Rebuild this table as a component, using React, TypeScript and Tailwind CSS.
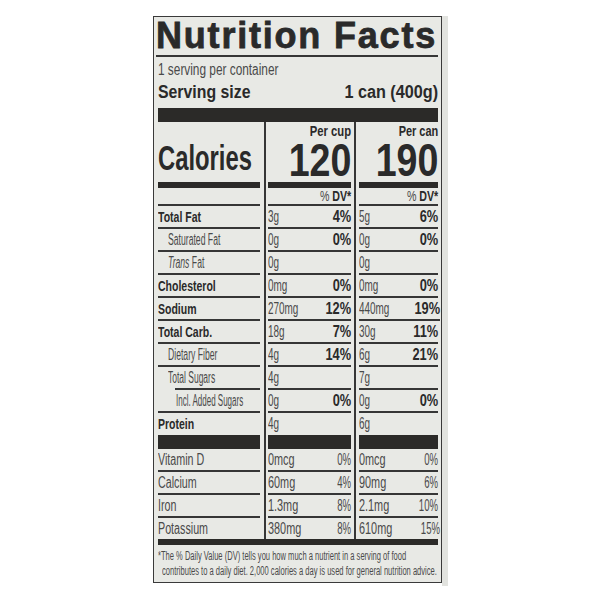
import React from "react";

const sans = "font-['Liberation_Sans',Arial,sans-serif]";

type Nutrient = {
  name: React.ReactNode;
  kind: "main" | "sub" | "sub2";
  cup: string;
  cupDv?: string;
  can: string;
  canDv?: string;
  line?: boolean;
  indentLine?: boolean;
};

const nutrients: Nutrient[] = [
  { name: "Total Fat", kind: "main", cup: "3g", cupDv: "4%", can: "5g", canDv: "6%" },
  { name: "Saturated Fat", kind: "sub", cup: "0g", cupDv: "0%", can: "0g", canDv: "0%" },
  { name: <><i>Trans</i> Fat</>, kind: "sub", cup: "0g", can: "0g" },
  { name: "Cholesterol", kind: "main", cup: "0mg", cupDv: "0%", can: "0mg", canDv: "0%" },
  { name: "Sodium", kind: "main", cup: "270mg", cupDv: "12%", can: "440mg", canDv: "19%" },
  { name: "Total Carb.", kind: "main", cup: "18g", cupDv: "7%", can: "30g", canDv: "11%" },
  { name: "Dietary Fiber", kind: "sub", cup: "4g", cupDv: "14%", can: "6g", canDv: "21%" },
  { name: "Total Sugars", kind: "sub", cup: "4g", can: "7g", indentLine: true },
  { name: "Incl. Added Sugars", kind: "sub2", cup: "0g", cupDv: "0%", can: "0g", canDv: "0%" },
  { name: "Protein", kind: "main", cup: "4g", can: "6g", line: false },
];

const vitamins = [
  { name: "Vitamin D", cup: "0mcg", cupDv: "0%", can: "0mcg", canDv: "0%" },
  { name: "Calcium", cup: "60mg", cupDv: "4%", can: "90mg", canDv: "6%" },
  { name: "Iron", cup: "1.3mg", cupDv: "8%", can: "2.1mg", canDv: "10%" },
  { name: "Potassium", cup: "380mg", cupDv: "8%", can: "610mg", canDv: "15%" },
];

// condensed text: the label's face is a narrow Helvetica, so squeeze Liberation Sans
function T({ children, className = "", right = false }: { children: React.ReactNode; className?: string; right?: boolean }) {
  return (
    <span className={`inline-block whitespace-nowrap ${right ? "origin-right" : "origin-left"} ${className}`}>
      {children}
    </span>
  );
}

function Row({
  left,
  mid,
  right,
  line = true,
  indentLine = false,
  height = "h-[23px]",
}: {
  left: React.ReactNode;
  mid: React.ReactNode;
  right: React.ReactNode;
  line?: boolean;
  indentLine?: boolean;
  height?: string;
}) {
  const ln = line ? "border-b-2 border-[#363636]" : "";
  return (
    <div className={`flex ${height}`}>
      <div className="w-[106px] shrink-0 pr-[4px]">
        <div className={`h-full flex items-center ${ln} ${indentLine ? "ml-[17px]" : ""}`}>{left}</div>
      </div>
      <div className="w-[90px] shrink-0 border-l-2 border-[#363636] pl-[2px] pr-[3px]">
        <div className={`h-full flex items-center justify-between ${ln}`}>{mid}</div>
      </div>
      <div className="flex-1 border-l-2 border-[#363636] pl-[3px]">
        <div className={`h-full flex items-center justify-between ${ln}`}>{right}</div>
      </div>
    </div>
  );
}

function Amount({ value, dv }: { value: string; dv?: string }) {
  return (
    <>
      <T className="text-[16px] leading-[18px] text-[#4a4a4a] scale-x-[0.62]">{value}</T>
      {dv && (
        <T right className="text-[16px] leading-[18px] font-bold text-[#2a2a2a] scale-x-[0.8]">
          {dv}
        </T>
      )}
    </>
  );
}

function VitAmount({ value, dv }: { value: string; dv: string }) {
  return (
    <>
      <T className="text-[16px] leading-[18px] text-[#4a4a4a] scale-x-[0.68]">{value}</T>
      <T right className="text-[16px] leading-[18px] text-[#4a4a4a] scale-x-[0.6]">
        {dv}
      </T>
    </>
  );
}

function Bar({ h }: { h: string }) {
  return <div className={`${h} bg-[#2b2a28]`} />;
}

function DvHead() {
  return (
    <T right className="text-[14px] leading-[16px] scale-x-[0.76]">
      <span className="text-[#4a4a4a]">%&nbsp;</span>
      <span className="font-bold">DV*</span>
    </T>
  );
}

export default function App() {
  return (
    <div className="w-[600px] h-[600px] bg-white flex pt-[16px] pl-[153px]">
      <div className={`w-[289px] h-[567px] border border-[#3a3a3a] bg-[#e8e9e5] pl-[4px] pr-[3px] flex flex-col text-[#2a2a2a] ${sans}`}>
        {/* header */}
        <div className="h-[40px] border-b-2 border-[#363636] -ml-[2px]">
          <div className="font-bold text-[36px] leading-[38px] tracking-[1.8px] [-webkit-text-stroke:0.8px_#2a2a2a] whitespace-nowrap">
            Nutrition Facts
          </div>
        </div>
        <div className="h-[23px] pt-[1px] leading-[23px]">
          <T className="text-[16px] text-[#4a4a4a] scale-x-[0.74]">1 serving per container</T>
        </div>
        <div className="h-[24px] flex justify-between items-center leading-[24px]">
          <T className="text-[18px] font-bold scale-x-[0.88]">Serving size</T>
          <T right className="text-[18px] font-bold scale-x-[0.9]">
            1 can (400g)
          </T>
        </div>
        <div className="mt-[4px]">
          <Bar h="h-[14px]" />
        </div>

        {/* calories */}
        <div className="flex h-[66px]">
          <div className="w-[106px] shrink-0 pr-[4px] flex flex-col justify-end">
            <div className="leading-[30px] mb-[2px]">
              <T className="text-[35px] font-bold scale-x-[0.68]">Calories</T>
            </div>
            <Bar h="h-[6px]" />
          </div>
          <div className="w-[90px] shrink-0 border-l-2 border-[#363636] pl-[2px] pr-[3px] flex flex-col">
            <div className="h-[18px] flex justify-end leading-[17px]">
              <T right className="text-[15px] font-bold scale-x-[0.75]">Per cup</T>
            </div>
            <div className="flex justify-end leading-[40px]">
              <T right className="text-[47px] font-bold scale-x-[0.8]">120</T>
            </div>
            <div className="mt-auto">
              <Bar h="h-[6px]" />
            </div>
          </div>
          <div className="flex-1 border-l-2 border-[#363636] pl-[3px] flex flex-col">
            <div className="h-[18px] flex justify-end leading-[17px]">
              <T right className="text-[15px] font-bold scale-x-[0.73]">Per can</T>
            </div>
            <div className="flex justify-end leading-[40px]">
              <T right className="text-[47px] font-bold scale-x-[0.8]">190</T>
            </div>
            <div className="mt-auto">
              <Bar h="h-[6px]" />
            </div>
          </div>
        </div>

        {/* % DV */}
        <div className="flex h-[18px]">
          <div className="w-[106px] shrink-0 pr-[4px]">
            <div className="h-full border-b-2 border-[#363636]" />
          </div>
          <div className="w-[90px] shrink-0 border-l-2 border-[#363636] pl-[2px] pr-[3px]">
            <div className="h-full border-b-2 border-[#363636] flex items-center justify-end">
              <DvHead />
            </div>
          </div>
          <div className="flex-1 border-l-2 border-[#363636] pl-[3px]">
            <div className="h-full border-b-2 border-[#363636] flex items-center justify-end">
              <DvHead />
            </div>
          </div>
        </div>

        {nutrients.map((n, i) => (
          <Row
            key={i}
            line={n.line !== false}
            height={n.line === false ? "h-[22px]" : "h-[23px]"}
            indentLine={n.indentLine}
            left={
              n.kind === "main" ? (
                <T className="text-[15px] leading-[18px] font-bold scale-x-[0.7]">{n.name}</T>
              ) : n.kind === "sub2" ? (
                <T className="ml-[18px] text-[16px] leading-[18px] text-[#4a4a4a] scale-x-[0.5]">{n.name}</T>
              ) : n.indentLine ? (
                <T className="-ml-[7px] text-[16px] leading-[18px] text-[#4a4a4a] scale-x-[0.53]">{n.name}</T>
              ) : (
                <T className="ml-[10px] text-[16px] leading-[18px] text-[#4a4a4a] scale-x-[0.54]">{n.name}</T>
              )
            }
            mid={<Amount value={n.cup} dv={n.cupDv} />}
            right={<Amount value={n.can} dv={n.canDv} />}
          />
        ))}

        {/* thick bar */}
        <div className="flex h-[14px]">
          <div className="w-[106px] shrink-0 pr-[4px]">
            <Bar h="h-full" />
          </div>
          <div className="w-[90px] shrink-0 border-l-2 border-[#363636] pl-[2px] pr-[3px]">
            <Bar h="h-full" />
          </div>
          <div className="flex-1 border-l-2 border-[#363636] pl-[3px]">
            <Bar h="h-full" />
          </div>
        </div>

        {vitamins.map((v, i) => {
          const last = i === vitamins.length - 1;
          return (
            <Row
              key={v.name}
              line={!last}
              height={last ? "h-[21px]" : "h-[23px]"}
              left={<T className="text-[16px] leading-[18px] text-[#4a4a4a] scale-x-[0.67]">{v.name}</T>}
              mid={<VitAmount value={v.cup} dv={v.cupDv} />}
              right={<VitAmount value={v.can} dv={v.canDv} />}
            />
          );
        })}

        <Bar h="h-[6px]" />

        <div className="pt-[3px] leading-[14px] text-[#4a4a4a]">
          <div>
            <T className="text-[12px] scale-x-[0.63]">*The % Daily Value (DV) tells you how much a nutrient in a serving of food</T>
          </div>
          <div className="pl-[4px]">
            <T className="text-[12px] scale-x-[0.63]">contributes to a daily diet. 2,000 calories a day is used for general nutrition advice.</T>
          </div>
        </div>
      </div>
      <div className="w-[6px] h-[570px] bg-[#e2e3df]" />
    </div>
  );
}
